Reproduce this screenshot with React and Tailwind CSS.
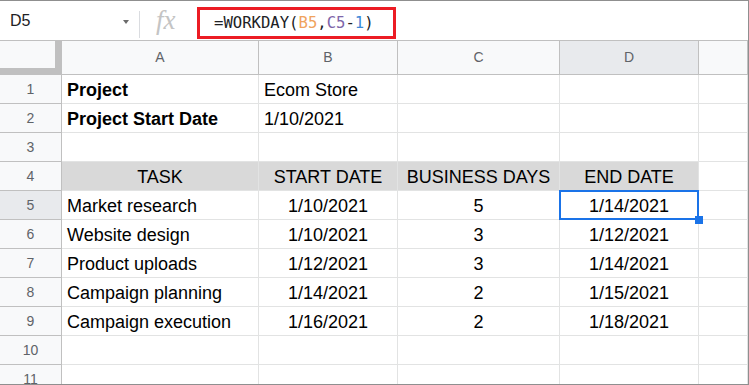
import React from "react";

const W = ["w-[62px]", "w-[197px]", "w-[139px]", "w-[162px]", "w-[139px]", "w-[49px]"];

const rows = [
  { n: 1, cells: [{ t: "Project", b: true }, { t: "Ecom Store" }, {}, {}, {}] },
  { n: 2, cells: [{ t: "Project Start Date", b: true }, { t: "1/10/2021" }, {}, {}, {}] },
  { n: 3, cells: [{}, {}, {}, {}, {}] },
  {
    n: 4,
    head: true,
    cells: [
      { t: "TASK", c: true },
      { t: "START DATE", c: true },
      { t: "BUSINESS DAYS", c: true },
      { t: "END DATE", c: true },
      {},
    ],
  },
  { n: 5, sel: true, cells: [{ t: "Market research" }, { t: "1/10/2021", c: true }, { t: "5", c: true }, { t: "1/14/2021", c: true, active: true }, {}] },
  { n: 6, cells: [{ t: "Website design" }, { t: "1/10/2021", c: true }, { t: "3", c: true }, { t: "1/12/2021", c: true }, {}] },
  { n: 7, cells: [{ t: "Product uploads" }, { t: "1/12/2021", c: true }, { t: "3", c: true }, { t: "1/14/2021", c: true }, {}] },
  { n: 8, cells: [{ t: "Campaign planning" }, { t: "1/14/2021", c: true }, { t: "2", c: true }, { t: "1/15/2021", c: true }, {}] },
  { n: 9, cells: [{ t: "Campaign execution" }, { t: "1/16/2021", c: true }, { t: "2", c: true }, { t: "1/18/2021", c: true }, {}] },
  { n: 10, cells: [{}, {}, {}, {}, {}] },
  { n: 11, cells: [{}, {}, {}, {}, {}] },
];

function Row({ row }) {
  return (
    <div className="flex h-[29px] shrink-0">
      <div
        className={`${W[0]} shrink-0 flex items-center justify-center border-r border-b border-[#c0c0c0] text-[14px] text-[#5f6368] ${
          row.sel ? "bg-[#e8eaed]" : "bg-[#f8f9fa]"
        }`}
      >
        {row.n}
      </div>
      {row.cells.map((c, i) => {
        const gray = row.head && i < 4;
        return (
          <div
            key={i}
            className={`${W[i + 1]} shrink-0 relative flex items-end pb-[2px] px-[5px] border-r border-b border-[#e2e3e3] text-[18px] leading-[21px] text-black whitespace-nowrap ${
              gray ? "bg-[#d9d9d9]" : "bg-white"
            } ${c.c ? "justify-center" : "justify-start"} ${c.b ? "font-bold" : "font-normal"}`}
          >
            {c.t}
            {c.active && (
              <>
                <div className="absolute left-[-1px] top-[-1px] w-[140px] h-[30px] border-2 border-[#1a73e8] pointer-events-none" />
                <div className="absolute right-[-5px] bottom-[-5px] w-[8px] h-[8px] bg-[#1a73e8] z-10" />
              </>
            )}
          </div>
        );
      })}
    </div>
  );
}

export default function App() {
  const letters = ["A", "B", "C", "D", ""];
  return (
    <div className="w-[749px] h-[385px] overflow-hidden bg-white border-t border-r border-b border-[#8f8f8f] flex flex-col font-['Liberation_Sans',Arial,sans-serif]">
      {/* formula bar */}
      <div className="h-[40px] shrink-0 flex border-b border-[#c0c0c0]">
        <div className="w-[139px] shrink-0 flex items-center justify-between pl-[10px] pr-[10px] pt-[1px]">
          <span className="text-[16px] text-[#202124]">D5</span>
          <span className="w-0 h-0 border-l-[3.5px] border-r-[3.5px] border-t-[4px] border-l-transparent border-r-transparent border-t-[#6b6b6b] mt-[2px]" />
        </div>
        <div className="w-px h-[27px] bg-[#dadce0] self-start mt-[10px]" />
        <div className="w-[57px] shrink-0 flex items-center pl-[16px]">
          <span className="font-['Liberation_Serif',serif] italic text-[27px] text-[#c4c4c4] leading-none">fx</span>
        </div>
        <div className="self-start mt-[6px] w-[199px] h-[32px] border-[3px] border-[#ec1c24] flex items-center pl-[14px] pt-[1px] font-['DejaVu_Sans_Mono',monospace] text-[15.6px] text-[#202124] whitespace-nowrap">
          <span>=WORKDAY(</span>
          <span className="text-[#f0a35e]">B5</span>
          <span>,</span>
          <span className="text-[#7e65a9]">C5</span>
          <span>-</span>
          <span className="text-[#3c8ad8]">1</span>
          <span>)</span>
        </div>
      </div>
      {/* column header */}
      <div className="h-[34px] shrink-0 flex">
        <div className={`${W[0]} shrink-0 bg-[#f8f9fa] border-r-[7px] border-b-[7px] border-[#c0c0c0]`} />
        {letters.map((l, i) => (
          <div
            key={i}
            className={`${W[i + 1]} shrink-0 flex items-center justify-center border-r border-b border-[#c0c0c0] text-[14px] text-[#5f6368] ${
              l === "D" ? "bg-[#e8eaed]" : "bg-[#f8f9fa]"
            }`}
          >
            {l}
          </div>
        ))}
      </div>
      {rows.map((r) => (
        <Row key={r.n} row={r} />
      ))}
    </div>
  );
}
